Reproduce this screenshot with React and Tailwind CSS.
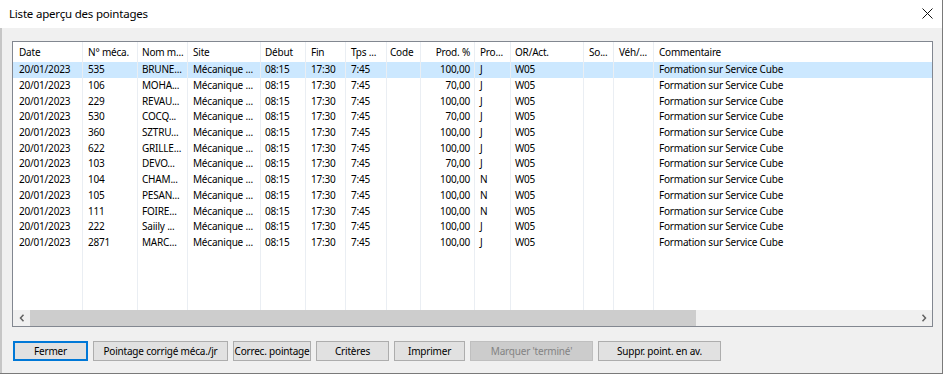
import React from "react";

const cols = [
  { cls: "w-[70px] pl-[6px]", label: "Date" },
  { cls: "w-[55px] pl-[5px]", label: "N° méca." },
  { cls: "w-[50px] pl-[4px]", label: "Nom m..." },
  { cls: "w-[73px] pl-[5px]", label: "Site" },
  { cls: "w-[45px] pl-[4px]", label: "Début" },
  { cls: "w-[40px] pl-[5px]", label: "Fin" },
  { cls: "w-[41px] pl-[5px]", label: "Tps ..." },
  { cls: "w-[34px] pl-[3px]", label: "Code" },
  { cls: "w-[54px] pr-[4px] justify-end", label: "Prod. %" },
  { cls: "w-[36px] pl-[5px]", label: "Pro..." },
  { cls: "w-[73px] pl-[4px]", label: "OR/Act." },
  { cls: "w-[30px] pl-[5px]", label: "So..." },
  { cls: "w-[40px] pl-[5px]", label: "Véh/..." },
  { cls: "flex-1 min-w-0 pl-[5px]", label: "Commentaire", last: true },
];

const people = [
  ["535", "BRUNE...", "100,00", "J"],
  ["106", "MOHA...", "70,00", "J"],
  ["229", "REVAU...", "100,00", "J"],
  ["530", "COCQ...", "70,00", "J"],
  ["360", "SZTRU...", "100,00", "J"],
  ["622", "GRILLE...", "100,00", "J"],
  ["103", "DEVO...", "70,00", "J"],
  ["104", "CHAM...", "100,00", "N"],
  ["105", "PESAN...", "100,00", "N"],
  ["111", "FOIRE...", "100,00", "N"],
  ["222", "Saiily ...", "100,00", "J"],
  ["2871", "MARC...", "100,00", "J"],
];

const rows = people.map(([num, nom, prod, p]) => [
  "20/01/2023",
  num,
  nom,
  "Mécanique ...",
  "08:15",
  "17:30",
  "7:45",
  "",
  prod,
  p,
  "W05",
  "",
  "",
  "Formation sur Service Cube",
]);

function Cell({ col, children }) {
  return (
    <div
      className={`${col.cls} ${
        col.last ? "" : "shrink-0 border-r border-[#eaeef3]"
      } h-full flex items-center whitespace-nowrap overflow-hidden`}
    >
      {children}
    </div>
  );
}

function Chevron({ left }) {
  return (
    <svg width="6" height="8" viewBox="0 0 6 8" fill="none">
      <path
        d={left ? "M4.5 0.8 L1.5 4 L4.5 7.2" : "M1.5 0.8 L4.5 4 L1.5 7.2"}
        stroke="#606060"
        strokeWidth="1.5"
      />
    </svg>
  );
}

function Button({ className, children, disabled, primary }) {
  return (
    <div
      className={`${className} h-[20px] shrink-0 flex items-center justify-center whitespace-nowrap overflow-hidden ${
        primary
          ? "border-2 border-[#0078d7] bg-[#e1e1e1] text-black"
          : disabled
          ? "border border-[#bfbfbf] bg-[#cccccc] text-[#838383]"
          : "border border-[#adadad] bg-[#e1e1e1] text-black"
      }`}
    >
      {children}
    </div>
  );
}

export default function App() {
  return (
    <div className="w-[945px] h-[376px] bg-white font-['Noto_Sans',sans-serif] text-black">
      <div className="w-[943px] h-[374px] border-r border-b border-[#7a7a7a] flex flex-col">
        {/* title bar */}
        <div className="h-[28px] shrink-0 flex items-center justify-between pl-[9px] pr-[9px] bg-white">
          <span className="text-[11.5px] tracking-[-0.2px]">Liste aperçu des pointages</span>
          <svg width="11" height="11" viewBox="0 0 11 11" className="-mt-[1px]">
            <path d="M0.5 0.5 L10.5 10.5 M10.5 0.5 L0.5 10.5" stroke="#111" strokeWidth="1" />
          </svg>
        </div>

        {/* body */}
        <div className="flex-1 bg-[#f0f0f0] border-l-2 border-[#c6c6c6] pl-[10px] pr-[9px] pt-[13px] flex flex-col text-[10px] tracking-[-0.2px]">
          <div className="h-[286px] shrink-0 border border-[#828790] bg-white flex flex-col">
            {/* header */}
            <div className="h-[20px] shrink-0 flex">
              {cols.map((c) => (
                <Cell key={c.label} col={c}>
                  {c.label}
                </Cell>
              ))}
            </div>

            {/* rows */}
            {rows.map((r, i) => (
              <div key={i} className={`h-[15.7px] shrink-0 flex ${i === 0 ? "bg-[#cce8ff]" : ""}`}>
                {cols.map((c, j) => (
                  <Cell key={j} col={c}>
                    {r[j]}
                  </Cell>
                ))}
              </div>
            ))}

            {/* empty space with column lines */}
            <div className="flex-1 flex">
              {cols.map((c, j) => (
                <Cell key={j} col={c} />
              ))}
            </div>

            {/* horizontal scrollbar */}
            <div className="h-[16px] shrink-0 flex bg-[#f0f0f0]">
              <div className="w-[17px] flex items-center justify-center">
                <Chevron left />
              </div>
              <div className="w-[666px] bg-[#cdcdcd]" />
              <div className="flex-1" />
              <div className="w-[17px] flex items-center justify-center">
                <Chevron />
              </div>
            </div>
          </div>

          {/* buttons */}
          <div className="mt-[14px] ml-[1px] flex gap-[5px]">
            <Button className="w-[75px]" primary>
              Fermer
            </Button>
            <Button className="w-[135px]">Pointage corrigé méca./jr</Button>
            <Button className="w-[78px]">Correc. pointage</Button>
            <Button className="w-[73px]">Critères</Button>
            <Button className="w-[71px]">Imprimer</Button>
            <Button className="w-[123px]" disabled>
              Marquer 'terminé'
            </Button>
            <Button className="w-[123px]">Suppr. point. en av.</Button>
          </div>
        </div>
      </div>
    </div>
  );
}
